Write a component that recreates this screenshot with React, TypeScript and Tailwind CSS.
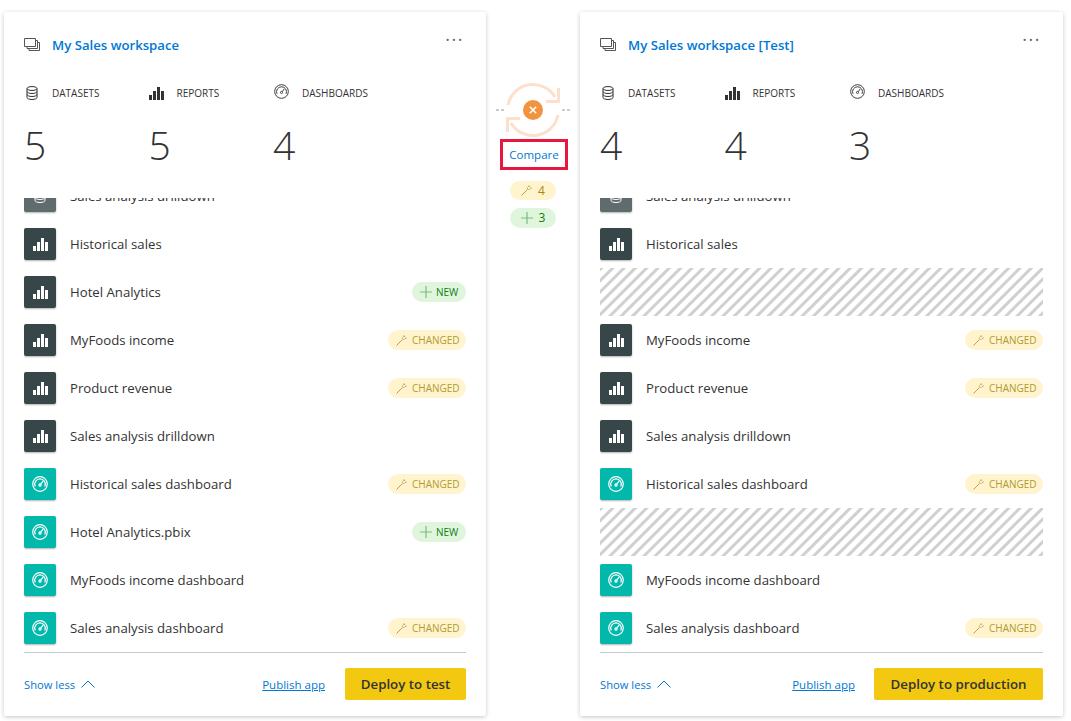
type Kind = "report" | "dashboard";
type Row = { name?: string; kind?: Kind; tag?: "new" | "changed"; empty?: boolean };

function WorkspaceIcon() {
  return (
    <svg width="16" height="13" viewBox="0 0 16 13" fill="none" stroke="#555" strokeWidth="1">
      <path d="M.5.5h11v8H.5z" />
      <path d="M11.5 2.5h2v8H3V8.5" />
      <path d="M13.5 4.5h2v8H5v-2" />
    </svg>
  );
}

function DatasetIcon({ color = "#333" }: { color?: string }) {
  return (
    <svg width="12" height="14" viewBox="0 0 12 14" fill="none" stroke={color} strokeWidth="1">
      <ellipse cx="6" cy="2.5" rx="5" ry="2" />
      <path d="M1 2.5v9c0 1.1 2.2 2 5 2s5-.9 5-2v-9" />
      <path d="M1 5.5c0 1.1 2.2 2 5 2s5-.9 5-2M1 8.5c0 1.1 2.2 2 5 2s5-.9 5-2" />
    </svg>
  );
}

function BarsIcon({ color = "#333", size = 15 }: { color?: string; size?: number }) {
  return (
    <svg width={size} height={(size * 13) / 15} viewBox="0 0 15 13" fill={color}>
      <path d="M0 8h3v5H0zM4 4h3v9H4zM8 0h3v13H8zM12 4h3v9h-3z" />
    </svg>
  );
}

function GaugeIcon({ color = "#333", size = 16, weight = 1 }: { color?: string; size?: number; weight?: number }) {
  return (
    <svg width={size} height={size} viewBox="0 0 16 16" fill="none" stroke={color} strokeWidth={weight}>
      <circle cx="8" cy="8" r="7.3" />
      <path d="M3.2 10.5A5.3 5.3 0 1 1 12.8 10.5" />
      <circle cx="8" cy="9" r="1.1" />
      <path d="M8.8 8.2 11 5.2" />
    </svg>
  );
}

function WandIcon({ color = "#b8a04a" }: { color?: string }) {
  return (
    <svg width="11" height="11" viewBox="0 0 11 11" fill="none" stroke={color} strokeWidth="1">
      <path d="M.5 10.5 6.6 4.4" />
      <circle cx="8" cy="3" r="1.6" strokeDasharray="1.2 .6" />
      <path d="M8 .2v.6M10.8 3h-.6" />
    </svg>
  );
}

function PlusIcon() {
  return (
    <svg width="12" height="12" viewBox="0 0 12 12" stroke="#7fb97f" strokeWidth="1.2">
      <path d="M6 0v12M0 6h12" />
    </svg>
  );
}

function ItemIcon({ kind }: { kind: Kind }) {
  if (kind === "report") {
    return (
      <div className="flex h-8 w-8 shrink-0 items-center justify-center rounded-[2px] bg-[#374649] shadow-[0_1px_2px_rgba(0,0,0,0.3)]">
        <BarsIcon color="#ffffff" />
      </div>
    );
  }
  return (
    <div className="flex h-8 w-8 shrink-0 items-center justify-center rounded-[2px] bg-[#01b8aa] shadow-[0_1px_2px_rgba(0,0,0,0.3)]">
      <GaugeIcon color="#ffffff" weight={1.2} />
    </div>
  );
}

function Tag({ tag }: { tag: "new" | "changed" }) {
  if (tag === "new") {
    return (
      <div className="flex h-5 w-[54px] items-center gap-1 rounded-full bg-[#dff6dd] pl-2 text-[10px] text-[#107c10]">
        <PlusIcon />
        NEW
      </div>
    );
  }
  return (
    <div className="flex h-5 w-[78px] items-center gap-[5px] rounded-full bg-[#fff4ce] pl-2 text-[10px] text-[#b09a30]">
      <WandIcon />
      CHANGED
    </div>
  );
}

function Stat({
  icon,
  iconClass,
  label,
  value,
}: {
  icon: React.ReactNode;
  iconClass: string;
  label: string;
  value: number;
}) {
  return (
    <div className="w-[124.5px]">
      <div className="flex h-[22px] items-center">
        <div className={`flex items-center ${iconClass}`}>{icon}</div>
        <span className="text-[10px] text-[#333]">{label}</span>
      </div>
      <div className="mt-[21px] h-[73px] text-[39px] leading-[40px] font-light text-[#333]">{value}</div>
    </div>
  );
}

function Card({
  title,
  counts,
  rows,
  deploy,
  deployW,
  publishGap,
}: {
  title: string;
  counts: number[];
  rows: Row[];
  deploy: string;
  deployW: string;
  publishGap: string;
}) {
  return (
    <div className="flex h-[704px] flex-col rounded-[2px] bg-white px-5 pt-5 shadow-[0_1px_4px_rgba(0,0,0,0.22)]">
      <div className="flex h-[26px] items-center">
        <div className="-mt-[1px] w-7">
          <WorkspaceIcon />
        </div>
        <span className="mt-[2px] text-[13.2px] font-semibold text-[#0078d4]">{title}</span>
        <span className="ml-auto mb-3 mr-[2px] text-[18px] tracking-[1.5px] leading-none text-[#666]">···</span>
      </div>
      <div className="mt-[24px] flex">
        <Stat icon={<DatasetIcon />} iconClass="w-7 pl-[2px]" label="DATASETS" value={counts[0]} />
        <Stat icon={<BarsIcon />} iconClass="w-7" label="REPORTS" value={counts[1]} />
        <Stat
          icon={<GaugeIcon size={15} />}
          iconClass="w-[29px] pl-[1px] -mt-[3px]"
          label="DASHBOARDS"
          value={counts[2]}
        />
      </div>
      <div className="h-[454px] overflow-hidden">
        <div className="-mt-[26px] flex h-12 items-center">
          <div className="flex h-8 w-8 shrink-0 items-center justify-center rounded-[2px] bg-[#5f6b6d] shadow-[0_1px_2px_rgba(0,0,0,0.3)]">
            <DatasetIcon color="#ffffff" />
          </div>
          <span className="ml-[14px] mt-[2px] text-[13.2px] text-[#333]">Sales analysis drilldown</span>
        </div>
        {rows.map((row, i) =>
          row.empty ? (
            <div
              key={i}
              className="h-12 bg-[repeating-linear-gradient(135deg,#d0d0d0_0px,#d0d0d0_2px,#ffffff_3px,#ffffff_7px,#d0d0d0_8px)]"
            />
          ) : (
            <div key={i} className="flex h-12 items-center">
              <ItemIcon kind={row.kind!} />
              <span className="ml-[14px] mt-[2px] text-[13.2px] text-[#333]">{row.name}</span>
              {row.tag && (
                <div className="ml-auto">
                  <Tag tag={row.tag} />
                </div>
              )}
            </div>
          ),
        )}
      </div>
      <div className="flex h-[63px] items-center border-t border-[#c8c8c8]">
        <span className="mt-[2px] text-[11.2px] text-[#0078d4]">Show less</span>
        <svg className="ml-[6px]" width="14" height="8" viewBox="0 0 14 8" fill="none" stroke="#0078d4">
          <path d="M.5 7.5 7 1l6.5 6.5" />
        </svg>
        <span className={`ml-auto mt-[2px] text-[11.5px] text-[#0078d4] underline ${publishGap}`}>Publish app</span>
        <button className={`h-8 rounded-[2px] bg-[#f2c811] pt-[1px] text-[13.3px] font-semibold text-[#333] ${deployW}`}>
          {deploy}
        </button>
      </div>
    </div>
  );
}

const devRows: Row[] = [
  { name: "Historical sales", kind: "report" },
  { name: "Hotel Analytics", kind: "report", tag: "new" },
  { name: "MyFoods income", kind: "report", tag: "changed" },
  { name: "Product revenue", kind: "report", tag: "changed" },
  { name: "Sales analysis drilldown", kind: "report" },
  { name: "Historical sales dashboard", kind: "dashboard", tag: "changed" },
  { name: "Hotel Analytics.pbix", kind: "dashboard", tag: "new" },
  { name: "MyFoods income dashboard", kind: "dashboard" },
  { name: "Sales analysis dashboard", kind: "dashboard", tag: "changed" },
];

const testRows: Row[] = [
  { name: "Historical sales", kind: "report" },
  { empty: true },
  { name: "MyFoods income", kind: "report", tag: "changed" },
  { name: "Product revenue", kind: "report", tag: "changed" },
  { name: "Sales analysis drilldown", kind: "report" },
  { name: "Historical sales dashboard", kind: "dashboard", tag: "changed" },
  { empty: true },
  { name: "MyFoods income dashboard", kind: "dashboard" },
  { name: "Sales analysis dashboard", kind: "dashboard", tag: "changed" },
];

function SyncIcon() {
  return (
    <div className="relative h-[62px] w-[74px]">
      <svg width="74" height="62" viewBox="0 0 74 62" fill="none">
        <path d="M0 31h3M5 31h3M66 31h3M71 31h3" stroke="#999" />
        <path d="M12 26A25.5 25.5 0 0 1 59 18" stroke="#fce0cc" strokeWidth="3" />
        <path d="M62 36A25.5 25.5 0 0 1 15 44" stroke="#fce0cc" strokeWidth="3" />
        <path d="M50 22.5h12.5V9" stroke="#fce0cc" strokeWidth="3" />
        <path d="M24 39.5H11.5V53" stroke="#fce0cc" strokeWidth="3" />
      </svg>
      <div className="absolute left-[27px] top-[21px] flex h-5 w-5 items-center justify-center rounded-full bg-[#f2933f]">
        <svg width="8" height="8" viewBox="0 0 8 8" stroke="#ffffff" strokeWidth="1.6">
          <path d="M.8.8l6.4 6.4M7.2.8.8 7.2" />
        </svg>
      </div>
    </div>
  );
}

export default function App() {
  return (
    <div className="flex h-[721px] w-[1071px] overflow-hidden bg-white pl-1 pt-3 font-['Open_Sans',sans-serif]">
      <div className="w-[482px] shrink-0">
        <Card
          title="My Sales workspace"
          counts={[5, 5, 4]}
          rows={devRows}
          deploy="Deploy to test"
          deployW="w-[121px]"
          publishGap="mr-5"
        />
      </div>
      <div className="flex w-[94px] shrink-0 flex-col items-center pt-[67px]">
        <SyncIcon />
        <div className="ml-[2px] mt-[-2px] flex h-[31px] w-[68px] items-center justify-center border-[3px] border-[#e8173f] text-[11.5px] text-[#0078d4]">
          Compare
        </div>
        <div className="mt-[11px] flex h-[19px] w-[46px] items-center justify-center gap-[6px] rounded-full bg-[#fff4ce] text-[12px] text-[#a8890c]">
          <WandIcon />4
        </div>
        <div className="mt-2 flex h-5 w-[46px] items-center justify-center gap-[6px] rounded-full bg-[#dff6dd] text-[12px] text-[#107c10]">
          <PlusIcon />3
        </div>
      </div>
      <div className="w-[483px] shrink-0">
        <Card
          title="My Sales workspace [Test]"
          counts={[4, 4, 3]}
          rows={testRows}
          deploy="Deploy to production"
          deployW="w-[169px]"
          publishGap="mr-[19px]"
        />
      </div>
    </div>
  );
}
